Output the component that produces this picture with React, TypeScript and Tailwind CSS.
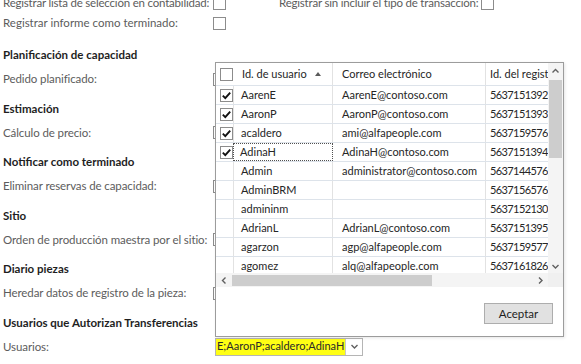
import React from "react";

type UserRow = {
  id: string;
  email: string;
  rec: string;
  checked?: boolean;
  focused?: boolean;
};

const users: UserRow[] = [
  { id: "AarenE", email: "AarenE@contoso.com", rec: "5637151392", checked: true },
  { id: "AaronP", email: "AaronP@contoso.com", rec: "5637151393", checked: true },
  { id: "acaldero", email: "ami@alfapeople.com", rec: "5637159576", checked: true },
  { id: "AdinaH", email: "AdinaH@contoso.com", rec: "5637151394", checked: true, focused: true },
  { id: "Admin", email: "administrator@contoso.com", rec: "5637144576" },
  { id: "AdminBRM", email: "", rec: "5637156576" },
  { id: "admininm", email: "", rec: "5637152130" },
  { id: "AdrianL", email: "AdrianL@contoso.com", rec: "5637151395" },
  { id: "agarzon", email: "agp@alfapeople.com", rec: "5637159577" },
  { id: "agomez", email: "alq@alfapeople.com", rec: "5637161826" },
];

function CheckBox({ checked = false }: { checked?: boolean }) {
  return (
    <span className="flex h-[13px] w-[13px] shrink-0 items-center justify-center border border-[#8c8c8c] bg-white">
      {checked && (
        <svg width="11" height="11" viewBox="0 0 11 11">
          <path d="M1.8 5.6 L4.3 8.1 L9.2 2.6" fill="none" stroke="#111" strokeWidth="1.9" />
        </svg>
      )}
    </span>
  );
}

function Chevron({ dir }: { dir: "up" | "down" | "left" | "right" }) {
  const d = {
    up: "M1.5 5.5 L4.5 2.5 L7.5 5.5",
    down: "M1.5 3 L4.5 6 L7.5 3",
    left: "M5.5 1.5 L2.5 4.5 L5.5 7.5",
    right: "M3 1.5 L6 4.5 L3 7.5",
  }[dir];
  return (
    <svg width="9" height="9" viewBox="0 0 9 9">
      <path d={d} fill="none" stroke="#606060" strokeWidth="1.4" />
    </svg>
  );
}

function FieldRow({ label, children }: { label: string; children?: React.ReactNode }) {
  return (
    <div className="h-[29.5px]">
      <div className="flex h-[24px] items-center">
        <span className="w-[210px] whitespace-nowrap tracking-[-0.1px] text-[#5c5c5c]">{label}</span>
        {children ?? <CheckBox />}
      </div>
    </div>
  );
}

function Heading({ children }: { children: React.ReactNode }) {
  return (
    <div className="flex h-[24px] items-center whitespace-nowrap font-bold text-[#1e1e1e]">{children}</div>
  );
}

export default function App() {
  return (
    <div className="relative h-[364px] w-[581px] overflow-hidden bg-white font-['Lato',sans-serif] text-[11.5px]">
      {/* Form behind the lookup */}
      <div className="mt-[-7px] pl-[3px]">
        <div className="flex h-[20px] items-center whitespace-nowrap">
          <span className="w-[210px] tracking-[-0.2px] text-[#5c5c5c]">Registrar lista de selección en contabilidad:</span>
          <CheckBox />
          <span className="ml-[53px] w-[202px] tracking-[-0.2px] text-[#5c5c5c]">Registrar sin incluir el tipo de transacción:</span>
          <CheckBox />
        </div>
        <div className="flex h-[20px] items-center whitespace-nowrap">
          <span className="w-[210px] text-[#5c5c5c]">Registrar informe como terminado:</span>
          <CheckBox />
        </div>
        <div className="h-[10px]" />

        <Heading>Planificación de capacidad</Heading>
        <FieldRow label="Pedido planificado:" />
        <Heading>Estimación</Heading>
        <FieldRow label="Cálculo de precio:" />
        <Heading>Notificar como terminado</Heading>
        <FieldRow label="Eliminar reservas de capacidad:" />
        <Heading>Sitio</Heading>
        <FieldRow label="Orden de producción maestra por el sitio:" />
        <Heading>Diario piezas</Heading>
        <FieldRow label="Heredar datos de registro de la pieza:" />
        <Heading>Usuarios que Autorizan Transferencias</Heading>
        <FieldRow label="Usuarios:">
          <div className="ml-[2px] flex h-[18px] items-stretch border border-[#b5b5b5]">
            <div className="flex w-[129px] items-center overflow-hidden whitespace-nowrap bg-[#ffff14] pl-[1px] text-[11px] text-[#2a2a2a]">
              E;AaronP;acaldero;AdinaH
            </div>
            <div className="flex w-[17px] items-center justify-center border-l border-[#c8c8c8] bg-white">
              <Chevron dir="down" />
            </div>
          </div>
        </FieldRow>
      </div>

      {/* Lookup popup */}
      <div className="absolute left-[215px] top-[62px] flex h-[275px] w-[349px] flex-col border border-[#9c9c9c] bg-white text-[11px] text-[#262626] shadow-[1px_1px_3px_rgba(0,0,0,0.1)]">
        <div className="flex h-[210px]">
          <div className="w-[332px] overflow-hidden">
            {/* header */}
            <div className="flex h-[23px] items-center border-b border-[#dde3ea]">
              <div className="flex w-[17px] justify-end">
                <CheckBox />
              </div>
              <div className="flex h-full w-[100px] items-center justify-between border-r border-[#e2e2e2] pl-[9px] pr-[11px]">
                <span>Id. de usuario</span>
                <svg width="6" height="4" viewBox="0 0 6 4">
                  <path d="M0 4 L3 0 L6 4 Z" fill="#5a5a5a" />
                </svg>
              </div>
              <div className="flex h-full w-[153px] items-center border-r border-[#e2e2e2] pl-[9px]">
                Correo electrónico
              </div>
              <div className="flex h-full flex-1 items-center overflow-hidden whitespace-nowrap pl-[4px]">
                Id. del registro
              </div>
            </div>
            {/* rows */}
            {users.map((u) => (
              <div key={u.id} className="flex h-[19px] items-center border-b border-[#dde3ea]">
                <div className="flex w-[17px] justify-end">
                  {u.checked && <CheckBox checked />}
                </div>
                <div
                  className={
                    u.focused
                      ? "flex h-full w-[100px] items-center border border-dotted border-[#505050] pl-[6px]"
                      : "flex h-full w-[100px] items-center border-x border-[#e2e2e2] pl-[7px]"
                  }
                >
                  {u.id}
                </div>
                <div className="flex h-full w-[153px] items-center whitespace-nowrap border-r border-[#e2e2e2] pl-[9px]">
                  {u.email}
                </div>
                <div className="flex h-full flex-1 items-center overflow-hidden whitespace-nowrap pl-[4px] tracking-[-0.6px]">
                  {u.rec}
                </div>
              </div>
            ))}
          </div>
          {/* vertical scrollbar */}
          <div className="flex w-[15px] flex-col items-center bg-[#f4f4f4]">
            <div className="flex h-[17px] items-center justify-center">
              <Chevron dir="up" />
            </div>
            <div className="h-[78px] w-[13px] bg-[#cdcdcd]" />
            <div className="flex-1" />
            <div className="flex h-[14px] items-center justify-center">
              <Chevron dir="down" />
            </div>
          </div>
        </div>
        {/* horizontal scrollbar */}
        <div className="flex h-[14px]">
          <div className="flex w-[332px] items-center bg-[#f4f4f4]">
            <div className="flex w-[16px] justify-center">
              <Chevron dir="left" />
            </div>
            <div className="h-[11px] w-[200px] bg-[#cdcdcd]" />
            <div className="flex-1" />
            <div className="flex w-[16px] justify-center">
              <Chevron dir="right" />
            </div>
          </div>
          <div className="w-[15px] bg-[#f0f0f0]" />
        </div>
        {/* footer */}
        <div className="flex flex-1 items-start justify-end pr-[10px] pt-[16px]">
          <button className="h-[21px] w-[69px] border border-[#adadad] bg-[#e1e1e1] text-[11.5px] text-[#1e1e1e]">
            Aceptar
          </button>
        </div>
      </div>
    </div>
  );
}
